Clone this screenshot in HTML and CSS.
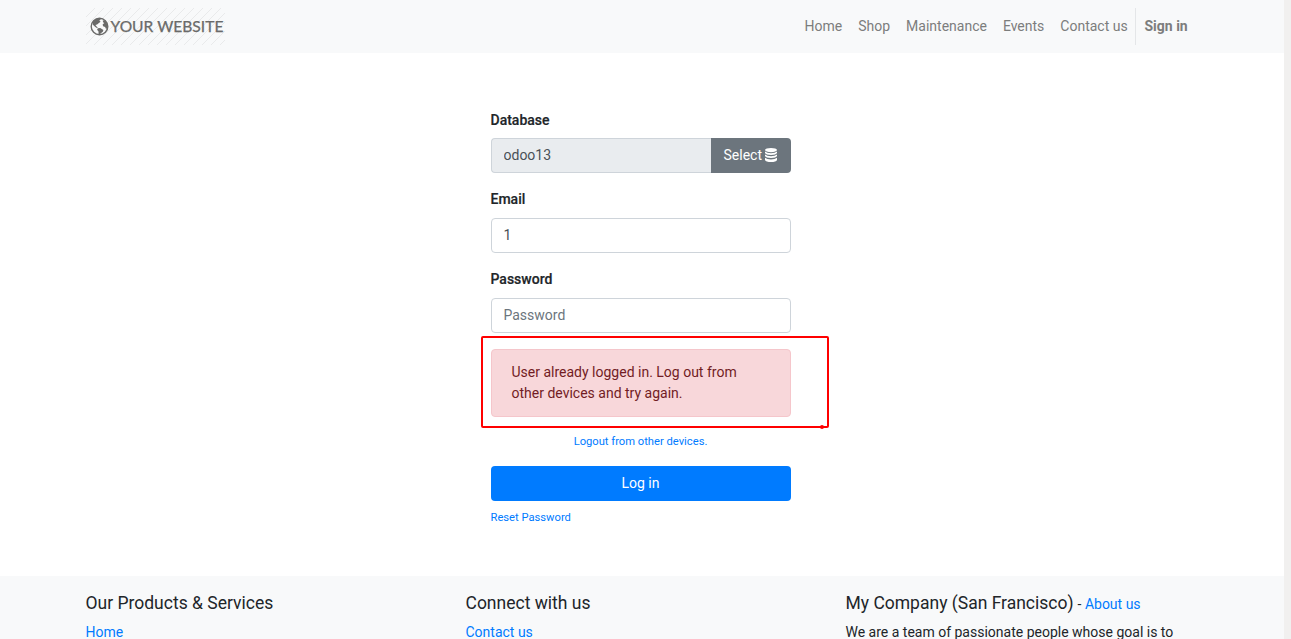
FILE: index.html
```
<!DOCTYPE html>
<html lang="en">
<head>
<meta charset="utf-8">
<title>Login | My Website</title>
<link rel="stylesheet" href="styles.css">
</head>
<body>
<div class="page">
  <header class="topbar">
    <div class="container topbar-inner">
      <a class="brand" href="#">
        <svg class="brand-art" width="139" height="37" viewBox="0 0 139 37">
          <defs><pattern id="stripes" width="9" height="9" patternUnits="userSpaceOnUse"><path d="M-1 10L10 -1M-1 1L1 -1M8 10L10 8" stroke="#e9eaeb" stroke-width="1"/></pattern></defs>
          <rect width="139" height="37" fill="url(#stripes)"/>
          <circle cx="13.5" cy="18.5" r="8.3" fill="#f8f9fa" stroke="#6a6a69" stroke-width="1.4"/>
          <path transform="translate(.3 0)" fill="#6a6a69" d="M6.7 13.2L9.5 10.9L13.5 10.4L14.5 11.8L12.9 12.6L14.3 13.8L12.3 15.2L10.8 16.6L9.1 17.1L10.3 18.6L11.7 20L10 19.7L7.9 18L6.3 16.4ZM11.5 20.3L13.9 20L17.1 22L16.5 23.8L14.5 25.2L13.5 26.6L12.3 26.3L12.2 23.6L10.8 21.8ZM16.5 12.2L19.3 12.9L21.1 16.3L21 19.7L19.8 21.2L18.8 19L16.8 18.3L16.3 16.5L18 15L16.7 14.2Z"/>
        </svg>
        <span class="brand-text">YOUR WEBSITE</span>
      </a>
      <nav class="menu">
        <a href="#">Home</a><a href="#">Shop</a><a href="#">Maintenance</a><a href="#">Events</a><a href="#">Contact us</a><a class="signin" href="#">Sign in</a>
      </nav>
    </div>
  </header>
  <main class="main">
    <form class="login">
      <label class="first" for="db">Database</label>
      <div class="db-group">
        <input class="field db" id="db" value="odoo13" readonly>
        <a class="select" href="#">Select
          <svg width="12" height="14" viewBox="0 0 13 14" preserveAspectRatio="none" fill="#fff"><ellipse cx="6.5" cy="2.1" rx="6.5" ry="2.1"/><path d="M0 3.6Q2 5.3 6.5 5.3T13 3.6V5Q12 6.9 6.5 6.9T0 5ZM0 6.6Q2 8.3 6.5 8.3T13 6.6V8Q12 9.9 6.5 9.9T0 8ZM0 9.8Q2 11.4 6.5 11.4T13 9.8V12Q12 14 6.5 14T0 12Z"/></svg></a>
      </div>
      <label for="email">Email</label>
      <input class="field" id="email" value="1">
      <label for="password">Password</label>
      <input class="field" id="password" type="password" placeholder="Password">
      <div class="alert">User already logged in. Log out from other devices and try again.<span class="marker"></span></div>
      <a class="small logout" href="#">Logout from other devices.</a>
      <button class="submit" type="button">Log in</button>
      <a class="small reset" href="#">Reset Password</a>
    </form>
  </main>
  <footer class="footer">
    <div class="container columns">
      <section><h5>Our Products &amp; Services</h5><a href="#">Home</a></section>
      <section><h5>Connect with us</h5><a href="#">Contact us</a></section>
      <section><h5>My Company (San Francisco)<span class="about"> - <a href="#">About us</a></span></h5><p>We are a team of passionate people whose goal is to</p></section>
    </div>
  </footer>
</div>
</body>
</html>
```
FILE: styles.css
```
* { box-sizing: border-box; }
body { margin: 0; height: 639px; overflow: hidden; background: #f1f0ef; color: #212529; font: 14px/21px Roboto, sans-serif; }
a { color: #007bff; text-decoration: none; }
.page { width: 1284px; height: 639px; overflow: hidden; background: #fff; display: flex; flex-direction: column; }
.container { width: 1140px; margin-left: 70.5px; padding: 0 15px; }
.topbar { height: 53px; flex: none; background: #f8f9fa; }
.topbar-inner { display: flex; justify-content: space-between; padding-top: 8px; }
.brand { display: grid; height: 37px; }
.brand-art, .brand-text { grid-area: 1 / 1; display: block; }
.brand-text { padding: 8px 0 0 25px; font: 15.6px/21px Lato, sans-serif; color: #6a6a69; white-space: nowrap; -webkit-text-stroke: .25px #6a6a69; }
.menu { display: flex; height: 37px; margin-right: -.2px; }
.menu a { padding: 8px; color: #7c7d7d; }
.menu .signin { margin-left: -.5px; padding-left: 8.3px; border-left: 1px solid #e4e6e8; font-weight: 700; }
.main { height: 523px; flex: none; padding: 57px 0 0 490.5px; }
.login { width: 300px; display: flex; flex-direction: column; }
label { font-weight: 500; line-height: 21px; margin-bottom: 8px; -webkit-text-stroke: .2px #212529; }
.first { margin-bottom: 7px; }
.field { width: 100%; height: 35px; margin: 0 0 16px; padding: 5px 12px 7px; border: 1px solid #ced4da; border-radius: 4px; background: #fff; color: #495057; font: inherit; }
.field::placeholder { color: #6c757d; opacity: 1; }
.db-group { display: flex; margin-bottom: 16px; }
.db { flex: 1; min-width: 0; margin: 0; background: #e9ecef; border-right: 0; border-radius: 4px 0 0 4px; }
.select { width: 80px; height: 35px; display: flex; align-items: center; justify-content: center; gap: 3.5px; background: #6c757d; color: #fff; border-radius: 0 4px 4px 0; }
.select svg { margin-bottom: 1px; }
.alert { position: relative; height: 68px; padding: 12px 20px; border: 1px solid #f5c6cb; border-radius: 4px; background: #f8d7da; color: #721c24; }
.marker { position: absolute; left: -11px; top: -14px; width: 348px; height: 92px; border: 2px solid #f00; border-radius: 2px; }
.marker::after { content: ""; position: absolute; right: 3px; bottom: -3px; width: 4px; height: 4px; border-radius: 50%; background: #f00; }
.small { font-size: 11.2px; line-height: 17px; }
.logout { align-self: center; margin-top: 16px; }
.submit { height: 35px; margin-top: 16px; border: 0; border-radius: 4px; background: #007bff; color: #fff; font: inherit; }
.reset { margin-top: 8px; align-self: flex-start; }
.footer { flex: 1; background: #f8f9fa; padding-top: 17px; }
.columns { display: grid; grid-template-columns: repeat(3, 380px); }
h5 { height: 21px; margin: 0 0 8px; font-size: 17.5px; line-height: 21px; font-weight: 400; white-space: nowrap; }
.about { font-size: 14px; margin-left: .5px; }
p { margin: 0; white-space: nowrap; }
```
